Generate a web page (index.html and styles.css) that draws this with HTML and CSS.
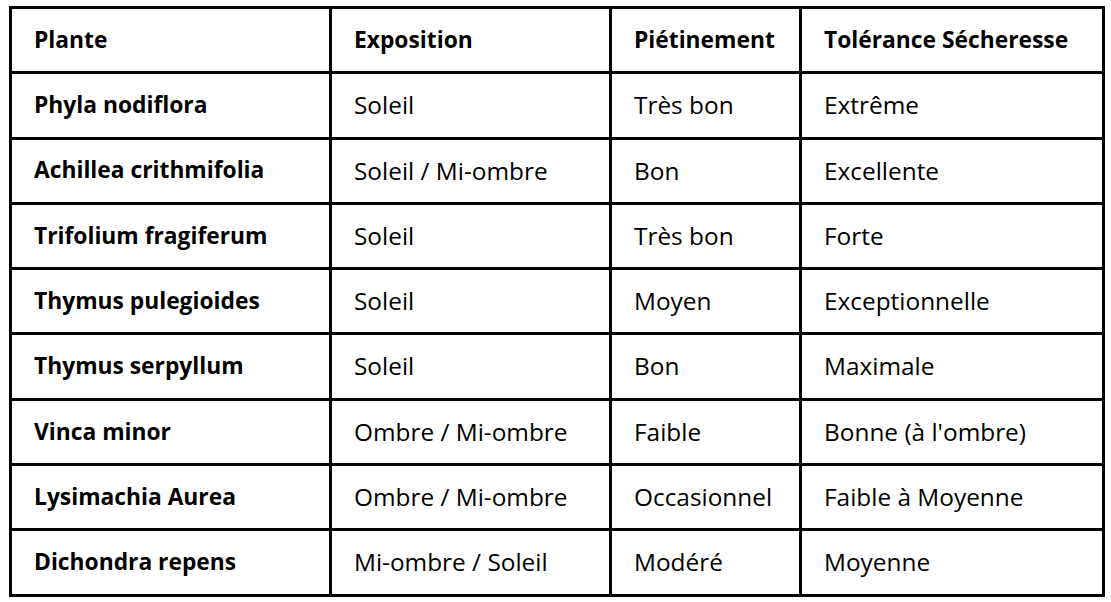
FILE: index.html
```html
<!DOCTYPE html>
<html lang="fr">
<head>
<meta charset="utf-8">
<title>Plantes couvre-sol</title>
<link rel="stylesheet" href="styles.css">
</head>
<body>
<table class="plants">
  <colgroup>
    <col class="c1"><col class="c2"><col class="c3"><col class="c4">
  </colgroup>
  <thead>
    <tr><th>Plante</th><th>Exposition</th><th>Piétinement</th><th>Tolérance Sécheresse</th></tr>
  </thead>
  <tbody>
    <tr><th>Phyla nodiflora</th><td>Soleil</td><td>Très bon</td><td>Extrême</td></tr>
    <tr><th>Achillea crithmifolia</th><td>Soleil / Mi-ombre</td><td>Bon</td><td>Excellente</td></tr>
    <tr><th>Trifolium fragiferum</th><td>Soleil</td><td>Très bon</td><td>Forte</td></tr>
    <tr><th>Thymus pulegioides</th><td>Soleil</td><td>Moyen</td><td>Exceptionnelle</td></tr>
    <tr><th>Thymus serpyllum</th><td>Soleil</td><td>Bon</td><td>Maximale</td></tr>
    <tr><th>Vinca minor</th><td>Ombre / Mi-ombre</td><td>Faible</td><td>Bonne (à l'ombre)</td></tr>
    <tr><th>Lysimachia Aurea</th><td>Ombre / Mi-ombre</td><td>Occasionnel</td><td>Faible à Moyenne</td></tr>
    <tr><th>Dichondra repens</th><td>Mi-ombre / Soleil</td><td>Modéré</td><td>Moyenne</td></tr>
  </tbody>
</table>
</body>
</html>
```
FILE: styles.css
```css
html, body {
  margin: 0;
  padding: 0;
  background: #ffffff;
}
body {
  font-family: "Open Sans", "Liberation Sans", sans-serif;
  color: #000000;
}
.plants {
  margin: 6px 0 0 9px;
  width: 1096px;
  table-layout: fixed;
  border-collapse: collapse;
  border: 3px solid #000;
}
.plants .c1 { width: 320px; }
.plants .c2 { width: 280px; }
.plants .c3 { width: 190px; }
.plants th,
.plants td {
  border: 3px solid #000;
  height: 65.3px;
  padding: 0 0 0 22px;
  box-sizing: border-box;
  text-align: left;
  vertical-align: middle;
  line-height: 1;
  white-space: nowrap;
}
.plants th {
  font-weight: 700;
  font-size: 22.8px;
}
.plants td {
  font-weight: 400;
  font-size: 24.4px;
}
```
